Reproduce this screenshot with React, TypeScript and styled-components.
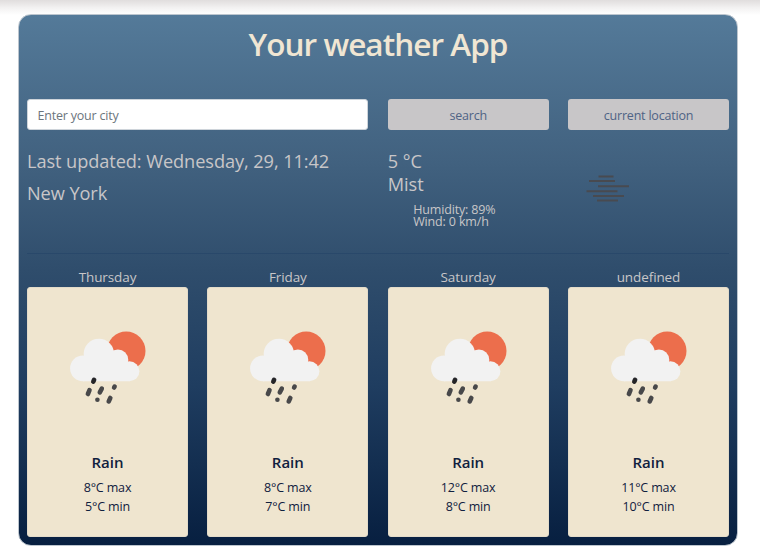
import React from "react";
import styled, { createGlobalStyle } from "styled-components";

const GlobalStyle = createGlobalStyle`
  * { box-sizing: border-box; }
  body {
    margin: 0;
    height: 555px;
    overflow: hidden;
    font-family: "Open Sans", "Noto Sans", sans-serif;
    background: linear-gradient(#e0dddd 0, #f3f2f2 8px, #ffffff 15px);
  }
`;

const Panel = styled.main`
  width: 720px;
  height: 532px;
  margin: 14px 0 0 18px;
  padding: 0 8px;
  border: 1px solid #bcc5ce;
  border-radius: 13px;
  background: linear-gradient(#547a99 0%, #41617f 28%, #2f4d6c 48%, #1f3d60 70%, #071f40 100%);
`;

const Title = styled.h1`
  margin: 0;
  padding-top: 10px;
  height: 84px;
  text-align: center;
  font-size: 31.5px;
  line-height: 37px;
  font-weight: 600;
  letter-spacing: -0.95px;
  color: #f0e6d3;
`;

const Columns = styled.div`
  display: grid;
  grid-template-columns: repeat(4, 161px);
  justify-content: space-between;
`;

const SearchInput = styled.input`
  grid-column: span 2;
  height: 31px;
  padding: 1px 10px 0 9.5px;
  border: 1px solid #ced4da;
  border-radius: 3px;
  font: 12.5px "Open Sans", sans-serif;
  letter-spacing: -0.2px;
  &::placeholder { color: #6c757d; opacity: 1; }
`;

const Button = styled.button`
  height: 31px;
  padding: 2px 0 0;
  border: 0;
  border-radius: 3px;
  background: #c8c6c8;
  color: #4f6385;
  font: 12.5px "Open Sans", sans-serif;
  letter-spacing: -0.2px;
`;

const Current = styled(Columns)`
  height: 123px;
  padding-top: 20px;
  color: #c8c6c8;
  font-size: 18.2px;
  line-height: 23px;
`;

const Place = styled.div`
  grid-column: span 2;
  letter-spacing: -0.08px;
`;

const City = styled.div`
  margin-top: 9px;
`;

const Details = styled.ul`
  list-style: none;
  margin: 8px 0 0;
  padding-left: 25.5px;
  font-size: 12.5px;
  line-height: 12px;
  letter-spacing: -0.15px;
`;

const MistIcon = styled.svg`
  display: block;
  margin: 22px 0 0 16px;
`;

const Divider = styled.hr`
  height: 1px;
  margin: 0 0 13px;
  border: 0;
  background: #29486a;
`;

const Day = styled.div`
  height: 20px;
  text-align: center;
  font-size: 13.5px;
  line-height: 21px;
  letter-spacing: -0.1px;
  color: #c8c6c8;
`;

const Card = styled.article`
  height: 250px;
  border: 1px solid #e3dbc9;
  border-radius: 3px;
  background: #efe5cf;
  color: #10203e;
  text-align: center;
`;

const RainIcon = styled.svg`
  display: block;
  margin: 32px 0 0 30px;
`;

const Condition = styled.h2`
  margin: 42px 0 6px;
  font-size: 15px;
  line-height: 20px;
  font-weight: 600;
`;

const Temperature = styled.div`
  font-size: 12.5px;
  line-height: 19px;
  letter-spacing: -0.15px;
`;

const days = [
  { name: "Thursday", max: 8, min: 5 },
  { name: "Friday", max: 8, min: 7 },
  { name: "Saturday", max: 12, min: 8 },
  { name: "undefined", max: 11, min: 10 },
];

const Rain = () => (
  <RainIcon width="100" height="90" viewBox="-0.4 -0.4 100 90">
    <circle cx="67.8" cy="30.5" r="19.3" fill="#ec6e4c" />
    <g fill="#f2f2f2">
      <circle cx="24.5" cy="48" r="12.8" />
      <circle cx="40.5" cy="33.5" r="15.2" />
      <circle cx="59.5" cy="39.5" r="10.4" />
      <circle cx="71" cy="50.8" r="10" />
      <path d="M24.5 36h35l11.5 14v10.8H24.5Z" />
    </g>
    <g stroke="#48484a" strokeWidth="4.6" strokeLinecap="round">
      <path d="M35.7 59.4l-.8 1.8" stroke="#252528" />
      <path d="M31.1 69.8l-1.6 3.8M43.4 68.2l-2 3.8M56.2 66.2l-.5.9M39 79.3v.1M51.9 77.6l-1.6 3.4" />
    </g>
  </RainIcon>
);

export default function App() {
  return (
    <>
      <GlobalStyle />
      <Panel>
        <Title>Your weather App</Title>
        <Columns>
          <SearchInput placeholder="Enter your city" />
          <Button>search</Button>
          <Button>current location</Button>
        </Columns>
        <Current>
          <Place>
            <div>Last updated: Wednesday, 29, 11:42</div>
            <City>New York</City>
          </Place>
          <div>
            <div>5 °C</div>
            <div>Mist</div>
            <Details>
              <li>Humidity: 89%</li>
              <li>Wind: 0 km/h</li>
            </Details>
          </div>
          <MistIcon width="48" height="34" viewBox="0 0 48 34" stroke="#484a50" strokeWidth="1.9">
            <path d="M14.5 4.5h15M5 9h26M14 14.2h31M2.5 19.2h31M9 24h31M13 28.5h21" />
          </MistIcon>
        </Current>
        <Divider />
        <Columns>
          {days.map((day) => (
            <section key={day.name}>
              <Day>{day.name}</Day>
              <Card>
                <Rain />
                <Condition>Rain</Condition>
                <Temperature>{day.max}°C max</Temperature>
                <Temperature>{day.min}°C min</Temperature>
              </Card>
            </section>
          ))}
        </Columns>
      </Panel>
    </>
  );
}
